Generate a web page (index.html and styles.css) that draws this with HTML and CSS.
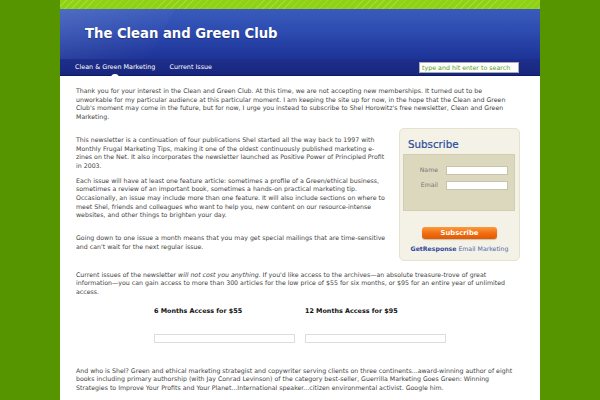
FILE: index.html
```html
<!DOCTYPE html>
<html>
<head>
<meta charset="utf-8">
<link rel="stylesheet" href="styles.css">
</head>
<body>
<div class="page">
  <div class="topband"></div>
  <header class="header">
    <h1 class="title">The Clean and Green Club</h1>
  </header>
  <nav class="nav">
    <a class="nav-item active">Clean &amp; Green Marketing</a>
    <a class="nav-item">Current Issue</a>
    <div class="search">type and hit enter to search</div>
  </nav>
  <main class="content">
    <p class="p1">Thank you for your interest in the Clean and Green Club. At this time, we are not accepting new memberships. It turned out to be unworkable for my particular audience at this particular moment. I am keeping the site up for now, in the hope that the Clean and Green Club's moment may come in the future, but for now, I urge you instead to subscribe to Shel Horowitz's free newsletter, Clean and Green Marketing.</p>
    <aside class="subscribe">
      <div class="sub-title">Subscribe</div>
      <div class="sub-fields">
        <div class="field"><span class="label">Name</span><span class="input"></span></div>
        <div class="field"><span class="label">Email</span><span class="input"></span></div>
      </div>
      <div class="sub-btn-row"><span class="sub-btn">Subscribe</span></div>
      <div class="sub-foot"><b>GetResponse</b> Email Marketing</div>
    </aside>
    <p class="p2">This newsletter is a continuation of four publications Shel started all the way back to 1997 with Monthly Frugal Marketing Tips, making it one of the oldest continuously published marketing e-zines on the Net. It also incorporates the newsletter launched as Positive Power of Principled Profit in 2003.</p>
    <p class="p3">Each issue will have at least one feature article: sometimes a profile of a Green/ethical business, sometimes a review of an important book, sometimes a hands-on practical marketing tip. Occasionally, an issue may include more than one feature. It will also include sections on where to meet Shel, friends and colleagues who want to help you, new content on our resource-intense websites, and other things to brighten your day.</p>
    <p class="p4">Going down to one issue a month means that you may get special mailings that are time-sensitive and can't wait for the next regular issue.</p>
    <p class="p5">Current issues of the newsletter <em>will not cost you anything</em>. If you'd like access to the archives—an absolute treasure-trove of great information—you can gain access to more than 300 articles for the low price of $55 for six months, or $95 for an entire year of unlimited access.</p>
    <div class="prices">
      <div class="price">
        <div class="price-title">6 Months Access for $55</div>
        <div class="price-box"></div>
      </div>
      <div class="price">
        <div class="price-title">12 Months Access for $95</div>
        <div class="price-box"></div>
      </div>
    </div>
    <p class="p6">And who is Shel? Green and ethical marketing strategist and copywriter serving clients on three continents...award-winning author of eight books including primary authorship (with Jay Conrad Levinson) of the category best-seller, Guerrilla Marketing Goes Green: Winning Strategies to Improve Your Profits and Your Planet...International speaker...citizen environmental activist. Google him.</p>
  </main>
</div>
</body>
</html>
```
FILE: styles.css
```css
html, body {
  margin: 0;
  padding: 0;
}
body {
  background: #579500;
  font-family: "DejaVu Sans", Verdana, sans-serif;
}
.page {
  width: 480px;
  margin: 0 auto;
  background: #fff;
  min-height: 400px;
}
.topband {
  height: 9px;
  background-color: #8fd116;
  background-image: repeating-linear-gradient(135deg, #8fd116 0 4px, #a0dc2c 4px 5px);
}
.header {
  height: 50px;
  background: linear-gradient(180deg, #3a5bbb 0%, #2d4bb0 45%, #1d3397 100%);
  position: relative;
  overflow: hidden;
  display: flex;
  align-items: center;
}
.header::before {
  content: "";
  position: absolute;
  left: -30px;
  top: -40px;
  width: 140px;
  height: 100px;
  background: linear-gradient(120deg, rgba(255,255,255,0.14), rgba(255,255,255,0));
  transform: skewX(-30deg);
}
.title {
  margin: 0 0 1px 25px;
  font-size: 13.2px;
  font-weight: bold;
  color: #fff;
  position: relative;
  text-shadow: 0 1px 1px rgba(0,0,0,0.3);
}
.nav {
  height: 16px;
  background: linear-gradient(180deg, #1e2f8c 0%, #18267c 100%);
  border-bottom: 1px solid #0f1a66;
  display: flex;
  align-items: center;
  padding-left: 15px;
  padding-right: 21px;
  position: relative;
}
.nav-item {
  color: #fff;
  font-size: 6.4px;
  margin-right: 14px;
  position: relative;
}
.nav-item.active::after {
  content: "";
  position: absolute;
  left: 36px;
  bottom: -7px;
  width: 8px;
  height: 4px;
  border-radius: 4px 4px 0 0;
  background: #fff;
}
.search {
  margin-left: auto;
  width: 96px;
  height: 9px;
  background: #fff;
  border: 1px solid #aab;
  color: #5a9a10;
  font-size: 6.3px;
  line-height: 9px;
  padding-left: 2px;
}
.content {
  padding: 11px 20px 20px 16px;
  color: #444;
  font-size: 6.25px;
  line-height: 8.7px;
}
.content p {
  margin: 0;
}
.p1 { margin-bottom: 14px !important; }
.p2 { margin-bottom: 6px !important; }
.p3 { margin-bottom: 14px !important; }
.p4 { margin-bottom: 19px !important; }
.p5 { margin-bottom: 10px !important; }
.subscribe {
  float: right;
  width: 119px;
  margin-top: -8px;
  margin-left: 13px;
  background: #f4f2e6;
  border: 1px solid #e6e2cd;
  border-radius: 5px;
  padding-bottom: 6px;
}
.sub-title {
  color: #2b4c9b;
  font-size: 10.3px;
  line-height: 12px;
  padding: 9px 0 0 8px;
  height: 16px;
  -webkit-text-stroke: 0.2px #2b4c9b;
}
.sub-fields {
  margin: 0 4px 0 3px;
  background: #dcd8bd;
  border: 1px solid #d2ceb2;
  height: 57px;
  padding-top: 11px;
  box-sizing: border-box;
}
.field {
  display: flex;
  align-items: center;
  height: 9px;
  margin-bottom: 6px;
}
.label {
  width: 38px;
  text-align: right;
  color: #777;
  font-size: 6.2px;
  padding-right: 4px;
  box-sizing: border-box;
}
.input {
  width: 62px;
  height: 9px;
  background: #fff;
  border: 1px solid #c8c4ac;
  box-sizing: border-box;
  margin-left: 4px;
}
.sub-btn-row {
  display: flex;
  justify-content: center;
  margin-top: 16px;
}
.sub-btn {
  width: 75px;
  height: 12px;
  border-radius: 3px;
  background: linear-gradient(180deg, #fb9a3e 0%, #f36f12 50%, #e05a00 100%);
  color: #fff;
  font-weight: bold;
  font-size: 6.8px;
  line-height: 12px;
  text-align: center;
  box-shadow: 0 1px 1px rgba(0,0,0,0.2);
}
.sub-foot {
  text-align: center;
  font-size: 6.2px;
  color: #4c66ad;
  margin-top: 6px;
}
.sub-foot b {
  color: #2f47a0;
}
.prices {
  display: flex;
  justify-content: center;
  gap: 10px;
  margin-bottom: 24px;
  padding-left: 4px;
}
.price {
  width: 141px;
}
.price-title {
  color: #111;
  font-weight: bold;
  font-size: 6.4px;
  height: 27px;
}
.price-box {
  height: 9px;
  border: 1px solid #ddd;
  box-sizing: border-box;
}
```
